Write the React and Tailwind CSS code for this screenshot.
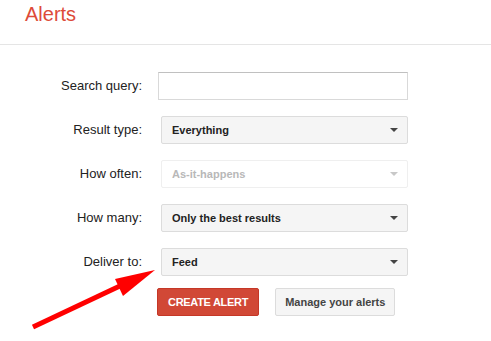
const font = { fontFamily: '"Liberation Sans", Arial, sans-serif' };

const Caret = ({ disabled }) => (
    <span
        className={`w-0 h-0 border-x-[4px] border-x-transparent border-t-[4px] ${disabled ? "border-t-[#c8c8c8]" : "border-t-[#444]"}`}
    />
);

const Select = ({ value, disabled }) => (
    <div
        className={`ml-[3px] w-[247px] h-7 rounded-[2px] border flex items-center justify-between pl-[10px] pr-[9px] text-[11px] font-bold ${
            disabled
                ? "bg-white border-[#efefef] text-[#b8b8b8]"
                : "bg-[#f5f5f5] border-[#dcdcdc] text-[#222]"
        }`}
    >
        <span>{value}</span>
        <Caret disabled={disabled} />
    </div>
);

const Row = ({ label, children }) => (
    <div className="flex items-center h-7">
        <label className="w-[142px] text-right text-[13px] text-[#222]">{label}</label>
        <div className="ml-4">{children}</div>
    </div>
);

export default function App() {
    return (
        <div className="relative w-[491px] h-[341px] bg-white overflow-hidden" style={font}>
            <div className="h-[45px] border-b border-[#e5e5e5] pt-[2px] pl-[25px]">
                <h1 className="text-[20px] leading-6 text-[#dd4b39]">Alerts</h1>
            </div>

            <div className="pt-[27px] flex flex-col gap-4">
                <Row label="Search query:">
                    <input
                        className="w-[250px] h-7 border border-[#d9d9d9] border-t-[#c0c0c0] outline-none px-2 text-[13px]"
                    />
                </Row>
                <Row label="Result type:">
                    <Select value="Everything" />
                </Row>
                <Row label="How often:">
                    <Select value="As-it-happens" disabled />
                </Row>
                <Row label="How many:">
                    <Select value="Only the best results" />
                </Row>
                <Row label="Deliver to:">
                    <Select value="Feed" />
                </Row>
                <div className="flex gap-4 pl-[157px] -mt-1">
                    <button className="h-7 px-[10px] rounded-[2px] bg-[#d14836] border border-[#c53727] text-white text-[11px] font-bold tracking-[-0.3px]">
                        CREATE ALERT
                    </button>
                    <button className="h-7 px-[9px] rounded-[2px] bg-[#f5f5f5] border border-[#dcdcdc] text-[#444] text-[11px] font-bold">
                        Manage your alerts
                    </button>
                </div>
            </div>

            <svg className="absolute left-0 top-0 pointer-events-none" width="491" height="341">
                <line x1="33" y1="327" x2="122" y2="285" stroke="#ff0000" strokeWidth="5" />
                <polygon points="155,270 115,279 123,296" fill="#ff0000" />
            </svg>
        </div>
    );
}
